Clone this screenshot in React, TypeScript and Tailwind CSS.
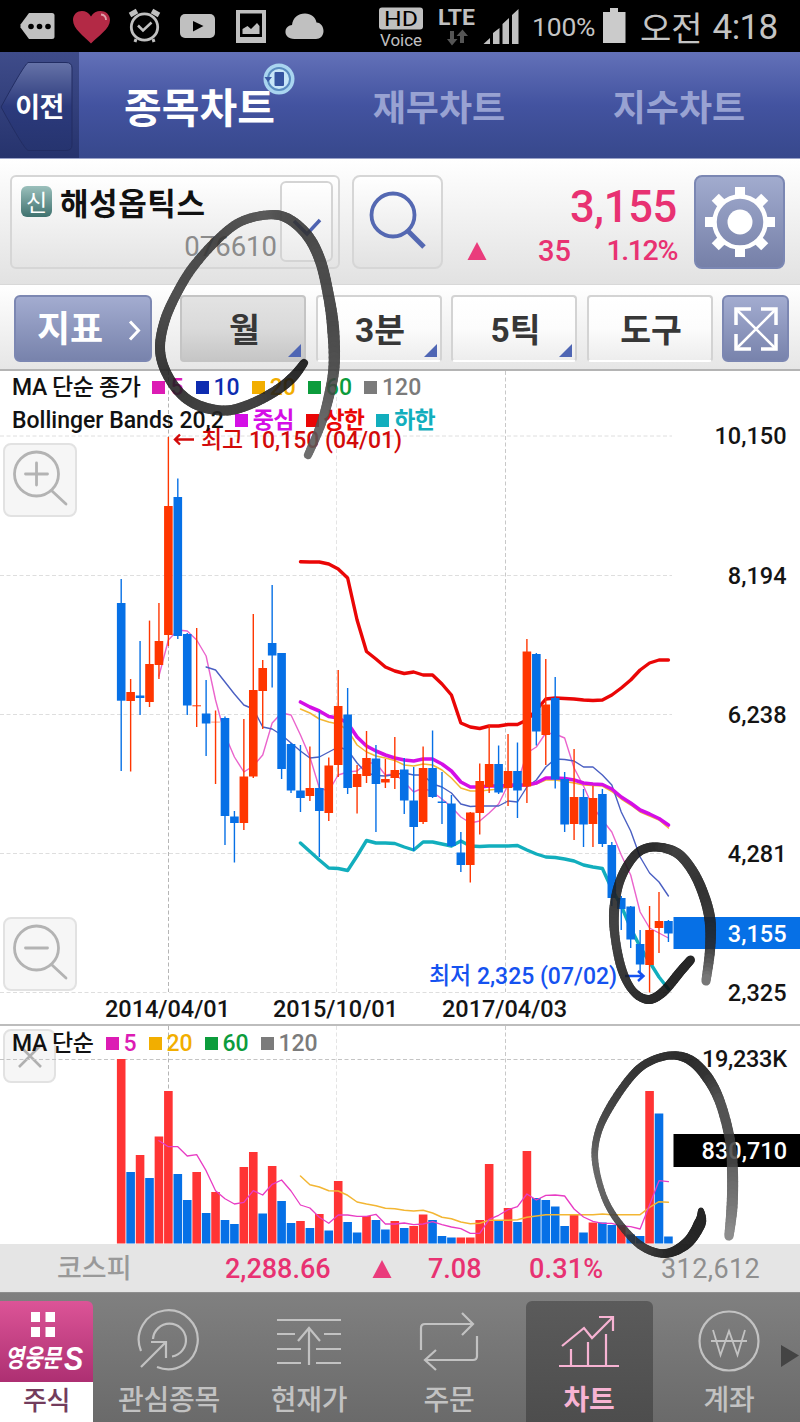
import type { ReactNode } from 'react';
import clsx from 'clsx';

const FIRST_X = 121.2;
const STEP = 9.435;
const RED = '#ff3600';
const BLUE = '#0670e6';

const xAt = (i: number) => FIRST_X + i * STEP;

// [up, high, body top, body bottom, low, volume top]
const candles: [number, number, number, number, number, number][] = [
  [0, 579, 603, 700.7, 771, 1059],
  [1, 679, 692, 701, 771.5, 1172],
  [0, 641, 695.5, 698, 715, 1155],
  [1, 620.6, 664, 702, 707, 1178],
  [1, 603, 641, 665, 679, 1136.5],
  [1, 437, 506, 635, 646, 1091],
  [0, 478.5, 497, 636, 639, 1174],
  [0, 633, 634, 705.5, 715, 1200],
  [1, 628, 705.3, 706.3, 727, 1172],
  [0, 680, 713.5, 723.5, 756, 1213],
  [1, 710.5, 721.8, 722.3, 784, 1192],
  [0, 716.5, 718, 816, 845, 1220],
  [0, 811, 816.5, 823, 862.5, 1224],
  [1, 719, 776.5, 823, 830, 1167],
  [1, 614, 690, 776.5, 778, 1152],
  [1, 660, 668, 691, 729, 1213.5],
  [0, 585, 643, 655.5, 687.5, 1166],
  [0, 653, 653, 769, 779, 1201],
  [0, 743, 744, 790.5, 793, 1223],
  [0, 745, 790.5, 798, 812, 1221],
  [1, 746.5, 788, 796, 801, 1228],
  [0, 711, 788, 811, 857, 1214],
  [1, 757.5, 765.5, 813, 821, 1230.5],
  [1, 670, 706, 765, 777, 1181],
  [0, 688, 714.5, 788, 794, 1222],
  [1, 765, 774, 787, 813.5, 1232.5],
  [1, 731, 758, 776, 783, 1216],
  [0, 745, 758.5, 784, 832, 1220],
  [1, 759, 779, 782.5, 788, 1229.5],
  [1, 737, 770, 778, 789, 1221],
  [0, 758, 769.5, 800.5, 814, 1228],
  [0, 767, 800.5, 827, 851, 1226],
  [1, 746.5, 768, 822, 824, 1214.5],
  [0, 730.5, 768, 797, 798, 1220],
  [0, 772, 801.5, 803, 824, 1236],
  [0, 795, 803.5, 846, 847, 1237.5],
  [0, 832, 852.5, 865, 872, 1237.5],
  [1, 812, 812.5, 865, 882.5, 1237.5],
  [1, 763.5, 781, 813, 834.5, 1220],
  [1, 725, 764, 787, 793, 1164],
  [0, 745.5, 764, 792.5, 794, 1220.5],
  [1, 734, 771, 788, 806, 1208],
  [0, 742.5, 771, 790.5, 818, 1222],
  [1, 639, 651.5, 786.5, 803, 1151],
  [0, 653, 654, 731.5, 745.5, 1198],
  [1, 659, 704.5, 735, 765, 1200],
  [0, 677, 698, 779.5, 788.5, 1206.5],
  [0, 772, 779, 824.5, 832, 1226],
  [1, 749, 797, 824, 840, 1214.5],
  [0, 789, 797, 824.5, 847, 1232.5],
  [1, 786, 798, 824, 847, 1222.5],
  [0, 789, 794, 844, 847, 1222.5],
  [0, 842, 845, 898, 906, 1225],
  [0, 896, 898, 909, 930, 1225],
  [0, 906, 906.5, 939.5, 948, 1234.5],
  [0, 930, 944, 964.5, 973, 1236],
  [1, 906, 930, 965, 992.5, 1091],
  [1, 892, 921, 928, 953, 1113.5],
  [0, 920, 921, 933.5, 942, 1236.5],
];

// Volume colours follow the previous month's volume, not the candle
const volumeReds = new Set([
  0, 2, 4, 5, 8, 10, 13, 14, 16, 19, 21, 23, 26, 29, 31, 32, 36, 37, 38, 39, 41, 43, 48, 50, 53, 56,
]);

const ma5 = [
  676, 640, 630, 631, 640, 656, 700, 735, 757, 772, 766, 755, 723, 713, 715, 735, 757, 788, 791, 775,
  772, 771, 763, 763, 775, 774, 782, 792, 788, 792, 799, 807, 817, 823, 821, 813, 804, 785, 783, 753,
  747, 733, 734, 738, 768, 786, 807, 820, 832, 855, 875, 912, 928, 933, 938,
];
const ma10 = [
  667, 670, 682, 694, 705, 709, 727, 729, 735, 743, 751, 758, 757, 752, 747, 750, 763, 773, 775.5,
  776, 774.5, 773, 775, 775, 784, 787, 793, 804, 806.5, 806, 806, 806, 801, 802, 787, 780, 767, 759,
  759.5, 761, 767, 767, 775, 785, 812, 831, 857, 873, 882, 896,
];
const middle = [
  702, 707, 711, 716.5, 718, 723, 737, 746, 751, 755, 758, 760, 761, 759, 759, 764, 771, 782, 787,
  787, 786, 786, 785.5, 785, 785, 783, 778, 778, 778.5, 780, 783, 784, 784.5, 789, 797, 803, 810, 814,
  818.5, 825,
];
const ma20 = [
  709, 713, 719, 722, 724, 730, 745, 752, 756, 758, 760.5, 765, 766, 764, 765, 770, 778, 788, 791, 791,
  790, 789, 787, 786, 786, 784, 780, 780, 781.5, 783, 785, 785.5, 786, 791.5, 799, 805, 812, 816, 820,
  828,
];
const upper = [
  561.7, 562, 562, 564, 569, 578, 620, 651.5, 659, 667, 671, 673.5, 672, 675, 675, 684, 695, 723, 727,
  728.5, 726, 726, 724.5, 724.5, 720, 710, 699, 698, 698.5, 699, 700, 700.5, 700, 695, 688, 680, 670,
  663, 660, 660,
];
const lower = [
  843, 851.5, 860, 868, 868.5, 870.5, 856, 840.5, 843, 843, 843.5, 847, 850, 842, 842, 844, 846, 841,
  846, 846.5, 846, 846, 846, 845.5, 850, 854, 857, 857.5, 859, 861, 865, 867, 868.5, 889, 906, 928, 947,
  962, 977, 989,
];
const volumeMa5 = [
  1140.7, 1146.7, 1146.7, 1156, 1154.7, 1170.7, 1190.7, 1198.7, 1204, 1202.3, 1190.7, 1195, 1184.3,
  1180, 1191, 1205, 1208, 1217.3, 1223.3, 1215, 1215, 1216.3, 1216.3, 1214.3, 1224, 1224, 1223, 1224.7,
  1224, 1221.7, 1224.7, 1227, 1228.7, 1233.3, 1233.3, 1219.3, 1215.3, 1209.7, 1206.7, 1194, 1200,
  1195.3, 1195, 1196, 1209, 1217, 1221.3, 1223.3, 1223.3, 1226, 1226.7, 1229, 1205, 1180.7, 1181.7,
];
const volumeMa20 = [
  1176, 1184.7, 1187, 1190.7, 1191, 1195.3, 1202, 1204, 1205.7, 1208.3, 1208.7, 1210.3, 1211, 1210.3,
  1213, 1217.3, 1218.7, 1222, 1223.7, 1223.3, 1220.3, 1220.3, 1220.3, 1219.7, 1217.3, 1216, 1214.7,
  1214.7, 1214.7, 1214.7, 1214.7, 1214.7, 1214, 1214.7, 1214.7, 1214.7, 1214.7, 1207.3, 1201.7, 1202.3,
];

function Series({ start, ys, color, width }: { start: number; ys: number[]; color: string; width: number }) {
  return (
    <polyline
      points={ys.map((y, k) => `${xAt(start + k)},${y}`).join(' ')}
      fill="none"
      stroke={color}
      strokeWidth={width}
      strokeLinecap="round"
      strokeLinejoin="round"
    />
  );
}

function Grid({ x, y1, y2, color }: { x: number; y1: number; y2: number; color: string }) {
  return <line x1={x} x2={x} y1={y1} y2={y2} stroke={color} strokeDasharray="4 2.5" />;
}

/* ---------- freehand marker ---------- */

// [x, y, width, gray]
type Ink = [number, number, number, number];

const inkMonth: Ink[] = [
  [304, 363, 8, 14], [293, 377, 10, 16], [277, 390, 10, 26], [253, 403, 10, 40], [227, 410.5, 10, 40],
  [200, 406, 10.5, 38], [180, 393, 10, 34], [165, 370, 10, 30], [160, 347, 10, 40], [165, 320, 10, 50],
  [177, 293, 9.5, 56], [193, 267, 9.5, 56], [217, 240, 9, 50], [240, 222, 9, 60], [267, 215, 9, 70],
  [287, 218, 10, 56], [307, 235, 11, 50], [320, 260, 11, 56], [328, 293, 11, 54], [333, 327, 12, 50],
  [334, 367, 11, 60], [328, 400, 10, 74], [320, 427, 9, 84], [308, 455, 8, 92],
];
const inkPrice: Ink[] = [
  [690.5, 960, 9, 10], [680, 972, 9.5, 10], [663, 992, 9.5, 12], [648, 999.5, 9, 14], [633, 991, 8, 20],
  [622, 970, 9, 30], [615.5, 940, 9, 40], [614, 913, 10, 40], [618, 887, 9, 30], [627, 866, 9, 24],
  [640, 851, 9, 20], [657, 847, 9, 16], [677, 853, 10, 40], [692, 870, 10, 30], [703, 893, 10.5, 24],
  [710, 920, 11, 30], [710, 950, 10, 40], [706, 981, 9, 110],
];
const inkVolume: Ink[] = [
  [701, 1210, 5, 10], [700, 1223, 12, 8], [687, 1243, 11, 10], [665, 1253.5, 8.5, 14], [640, 1245, 8, 40],
  [617, 1220, 6.5, 60], [603, 1194, 6, 80], [595, 1160, 6.5, 84], [598, 1133, 7, 60], [610, 1107, 8, 44],
  [630, 1078, 8, 30], [647, 1063, 8, 24], [670, 1055.5, 8, 20], [690, 1060, 10, 16], [707, 1077, 11, 24],
  [720, 1102, 10, 60], [730, 1140, 10, 60], [732.5, 1173, 11, 80], [732, 1207, 11, 100],
  [729, 1236, 9, 130],
];

function Marker({ points }: { points: Ink[] }) {
  const parts: ReactNode[] = [];
  const pieces = 8;
  const at = (i: number) => points[Math.max(0, Math.min(points.length - 1, i))];
  const spline = (i: number, t: number) =>
    [0, 1, 2, 3].map((k) => {
      const [a, b, c, d] = [at(i - 1)[k], at(i)[k], at(i + 1)[k], at(i + 2)[k]];
      if (k > 1) return b + (c - b) * t;
      return 0.5 * (2 * b + (c - a) * t + (2 * a - 5 * b + 4 * c - d) * t * t + (3 * b - a - 3 * c + d) * t ** 3);
    });
  for (let i = 0; i < points.length - 1; i++) {
    for (let n = 0; n < pieces; n++) {
      const [x1, y1, w, g] = spline(i, n / pieces);
      const [x2, y2] = spline(i, (n + 1) / pieces);
      parts.push(
        <line key={`${i}-${n}`} x1={x1} y1={y1} x2={x2} y2={y2} stroke={`rgb(${g},${g},${g})`} strokeWidth={w} strokeLinecap="round" />,
      );
    }
  }
  return <g opacity={0.88}>{parts}</g>;
}

/* ---------- top of the screen ---------- */

function StatusBar() {
  return (
    <div className="h-[52px] bg-black flex items-center text-[#c4c4c4]">
      <svg className="w-[520px] h-[52px] shrink-0" viewBox="0 0 520 52" fill="#c0c0c0">
        <path d="M29 13H52Q54.500 13 54.500 15.500V36.500Q54.500 39 52 39H29L20.500 27.500V24.500Z" />
        <g fill="#000">
          <circle cx="31" cy="26.500" r="2.800" />
          <circle cx="39.500" cy="26.500" r="2.800" />
          <circle cx="48" cy="26.500" r="2.800" />
        </g>
        <path fill="#b32945" d="M91 43.500C84 36 73 29 73 20C73 10 86 7.500 91 16.500C96 7.500 110 10 110 20C110 29 98 36 91 43.500Z" />
        <path d="M101 14.500Q106 15 106 20" fill="none" stroke="#e1a0ac" strokeWidth="1.800" />
        <g fill="none" stroke="#c0c0c0">
          <circle cx="144.500" cy="27" r="13.200" strokeWidth="2.800" />
          <path d="M138 25.500L143 30.500L151.500 22.500" strokeWidth="2.500" />
          <path d="M130 15L137 11M152 11L159 15" strokeWidth="5" />
          <path d="M136 39L135 42M153 39L154 42" strokeWidth="3" />
        </g>
        <rect x="180" y="14" width="35" height="24" rx="5" />
        <path fill="#000" d="M193 21L203.500 26L193 31.500Z" />
        <path fillRule="evenodd" d="M236 10H266V43H236ZM240 13.500V37H262V13.500Z" />
        <path d="M242.500 34V29L247.500 26L251 29L257 23L259.500 26V34Z" />
        <path d="M294.500 39C288 39 285 35 285.500 31C286 27 289 25.500 292 25C293 17.500 298 13.500 305 13.500C311 13.500 315.500 17 316.500 22.500C321 22.500 323.500 27 323.500 31C323.500 36 320 39 316 39Z" />
        <rect x="379" y="7.500" width="44" height="22" rx="3" />
        <text x="384" y="26" fontFamily="Roboto" fontSize="21" fill="#000" textLength="34" lengthAdjust="spacingAndGlyphs">HD</text>
        <text x="380" y="45.500" fontFamily="Roboto" fontSize="17" textLength="42" lengthAdjust="spacingAndGlyphs">Voice</text>
        <text x="438" y="24.500" fontFamily="Roboto" fontWeight="700" fontSize="22.500" textLength="37" lengthAdjust="spacingAndGlyphs">LTE</text>
        <path fill="#555" d="M450 31H454V39H457.500L452 45.500L447 39H450ZM460 43V36H456.500L462.500 29.500L468 36H464V43Z" />
        <path d="M483.500 44L490 38V44ZM493 44V33L499.500 28V44ZM502.500 44V24L509 18V44ZM512 44V15L518.500 9V44Z" />
      </svg>
      <span className="ml-[12px] w-[65px] font-[Roboto] text-[26.500px] leading-none tracking-[-0.2px] pt-[2px]">100%</span>
      <svg className="ml-[5px] w-[24px] h-[36px]" viewBox="0 0 24 36">
        <path fill="#cbcbcb" d="M8 0H16V4H23.500V35H1V4H8Z" />
      </svg>
      <div className="ml-[14px] flex items-center gap-[10px] leading-none whitespace-nowrap">
        <span className="font-['Noto_Sans_CJK_KR'] text-[34px] pt-[1px]">오전</span>
        <span className="font-[Roboto] text-[35px] tracking-[-0.6px] pt-[3px]">4:18</span>
      </div>
    </div>
  );
}

function Header() {
  return (
    <header className="h-[107px] flex bg-linear-to-b from-[#6371b8] via-[#4353a0] to-[#37488c] border-b border-[#9ba3c9] font-['Noto_Sans_CJK_KR'] font-bold text-[36px] leading-none">
      <button className="relative w-[79px] bg-linear-to-b from-[#3f4c8a] to-[#26336d] text-white text-[27px] flex items-center justify-center">
        <svg className="absolute inset-0" width="79" height="107" viewBox="0 0 79 107">
          <defs>
            <linearGradient id="back" x1="0" y1="0" x2="0" y2="1">
              <stop offset="0" stopColor="#6673a8" />
              <stop offset="0.5" stopColor="#2c3a7c" />
              <stop offset="1" stopColor="#26346f" />
            </linearGradient>
          </defs>
          <path d="M28 10.500H66Q72 10.500 72 16V93Q72 98.500 66 98.500H28Q24 97 1 55Q24 13 28 10.500Z" fill="url(#back)" stroke="#222d63" />
        </svg>
        <span className="relative tracking-tight">이전</span>
      </button>
      <nav className="flex-1 flex items-center">
        <a className="relative w-[241px] text-center text-[41px] text-white">
          종목차트
          <svg className="absolute right-[25px] -top-[22px]" width="32" height="32" viewBox="0 0 32 32">
            <circle cx="16" cy="16" r="15.500" fill="#a9d5f0" />
            <circle cx="16" cy="16" r="11" fill="#c6e6f8" stroke="#5a8cc0" strokeWidth="2" />
            <path d="M1.500 14H9L5 19Z" fill="#3b5aa5" />
            <rect x="11.500" y="9" width="9.500" height="14" rx="1" fill="#3554a0" />
          </svg>
        </a>
        <a className="w-[238px] text-center text-[#98a2d2]">재무차트</a>
        <a className="w-[242px] text-center text-[#98a2d2]">지수차트</a>
      </nav>
    </header>
  );
}

function StockInfo() {
  return (
    <section className="h-[126px] px-[10px] pt-[16px] flex bg-linear-to-b from-white to-[#e2e2e2] border-b border-[#d8d8d8]">
      <div className="w-[330px] h-[94px] rounded-md border-2 border-[#d6d6d6] bg-linear-to-b from-white to-[#e4e4e4] flex">
        <div className="w-[268px] flex flex-col">
          <div className="mt-[7px] ml-[9px] h-[34px] flex items-center gap-[8px] font-['Noto_Sans_CJK_KR'] leading-none">
            <span className="w-[31px] h-[31px] rounded-md bg-linear-to-b from-[#9bc0bc] to-[#3f726f] text-white text-[23px] flex items-center justify-center">신</span>
            <span className="text-[31px] font-bold tracking-[0.6px] text-[#111]">해성옵틱스</span>
          </div>
          <span className="self-end mr-[3px] mt-[15px] font-[Roboto] text-[27.500px] leading-none text-[#8b8b8b]">076610</span>
        </div>
        <div className="mt-[4px] w-[53px] h-[81px] rounded-md border-2 border-[#d4d4d4] bg-linear-to-b from-white to-[#ebebeb] flex items-center justify-center">
          <svg width="32" height="20" viewBox="0 0 32 20" fill="none" stroke="#4d62b0" strokeWidth="3.500" className="mt-3">
            <path d="M3 3L16 16L29 2" />
          </svg>
        </div>
      </div>
      <button className="ml-[12px] w-[91px] h-[94px] rounded-lg border-2 border-[#d6d6d6] bg-linear-to-b from-white to-[#e2e2e2] flex items-center justify-center">
        <svg className="-mt-1" width="60" height="60" viewBox="0 0 60 60" fill="none" stroke="#5468b2" strokeWidth="3.800">
          <circle cx="25" cy="25" r="21.500" />
          <path d="M40 41L56 57" strokeWidth="5" />
        </svg>
      </button>
      <div className="ml-[24px] w-[210px] font-[Roboto] font-medium text-[#e83272] leading-none">
        <div className="mt-[11px] text-right text-[43.500px] tracking-[-0.3px]">3,155</div>
        <div className="mt-[7px] flex items-center text-[29px]">
          <svg width="20" height="18" viewBox="0 0 20 18">
            <path d="M10 0L19.500 18H0.500Z" fill="#ea3c7c" />
          </svg>
          <span className="ml-[51px]">35</span>
          <span className="ml-auto text-[28.500px] tracking-[-1.400px]">1.12%</span>
        </div>
      </div>
      <button className="ml-[17px] w-[91px] h-[94px] rounded-lg border-2 border-[#7b87b3] bg-linear-to-b from-[#a1abce] to-[#7680a8] flex items-center justify-center">
        <svg width="70" height="70" viewBox="-35 -35 70 70">
          <circle r="25.500" fill="none" stroke="#fff" strokeWidth="4.500" />
          <circle r="12.500" fill="#fff" />
          <g fill="#fff">
            {[0, 45, 90, 135, 180, 225, 270, 315].map((a) => (
              <rect key={a} x="-5" y="-35" width="10" height="9" transform={`rotate(${a})`} />
            ))}
          </g>
        </svg>
      </button>
    </section>
  );
}

function ToolButton({ label, active, menu = true }: { label: string; active?: boolean; menu?: boolean }) {
  return (
    <button
      className={clsx(
        'relative w-[126px] h-[67px] shrink-0 rounded border-2 flex items-center justify-center pt-[5px] pl-[3px] text-[33.500px] text-[#373737]',
        active
          ? 'border-[#c4c4c4] bg-linear-to-b from-[#e3e3e3] via-[#dadada] to-[#c6c6c6]'
          : 'border-[#d3d3d3] border-b-transparent bg-linear-to-b from-white via-[#fcfcfc] to-[#ededed]',
      )}
    >
      <span>{label}</span>
      {menu && (
        <svg className="absolute right-[3px] bottom-[3px]" width="13" height="13" viewBox="0 0 13 13">
          <path d="M13 0V13H0Z" fill="#4f66b4" />
        </svg>
      )}
    </button>
  );
}

function Toolbar() {
  return (
    <section className="h-[86px] pt-[10px] pl-[14px] pr-[10px] flex bg-linear-to-b from-white to-[#e6e6e6] border-b-2 border-[#b4b4b4] font-[Roboto,'Noto_Sans_CJK_KR'] font-bold leading-none">
      <button className="w-[138px] h-[67px] shrink-0 rounded-md border-2 border-[#7c87b2] bg-linear-to-b from-[#a3acd0] to-[#7883ac] flex items-center text-white text-[36px]">
        <span className="ml-[21px] pt-[3px]">지표</span>
        <svg className="ml-[25px] mt-1" width="13" height="21" viewBox="0 0 13 21" fill="none" stroke="#fff" strokeWidth="3">
          <path d="M2 1.500L10.500 10.500L2 19.500" />
        </svg>
      </button>
      <div className="ml-[28px] flex gap-[9.500px]">
        <ToolButton label="월" active />
        <ToolButton label="3분" />
        <ToolButton label="5틱" />
        <ToolButton label="도구" menu={false} />
      </div>
      <button className="ml-[9.500px] w-[67px] h-[67px] shrink-0 rounded-md border-2 border-[#7c87b2] bg-linear-to-b from-[#a3acd0] to-[#7883ac] flex items-center justify-center">
        <svg width="44" height="44" viewBox="0 0 44 44" fill="none" stroke="#fff" strokeWidth="3.500">
          <path d="M2 18V2H17M27 2H42V18M42 27V42H27M17 42H2V27" />
          <path d="M3 3L41 41M41 3L3 41" strokeWidth="2.600" />
        </svg>
      </button>
    </section>
  );
}

/* ---------- charts ---------- */

function Legend({ color, label }: { color: string; label: string }) {
  return (
    <span className="ml-[12px] flex items-center gap-[5px]" style={{ color }}>
      <i className="w-[13px] h-[13px]" style={{ backgroundColor: color }} />
      {label}
    </span>
  );
}

function ZoomButton({ plus }: { plus?: boolean }) {
  return (
    <button className="w-[74px] h-[74px] rounded-lg border-2 border-[#e2e2e2] bg-[#f6f6f6]">
      <svg width="70" height="70" viewBox="0 0 70 70" fill="none" stroke="#b3b3b3" strokeWidth="2.800" strokeLinecap="round">
        <circle cx="31.500" cy="29" r="22" />
        <path d={plus ? 'M20.500 29H42.500M31.500 18V40' : 'M20.500 29H42.500'} />
        <path d="M47 46L61 59" />
      </svg>
    </button>
  );
}

function PriceChart() {
  const levels: [number, string][] = [
    [436, '10,150'],
    [575.5, '8,194'],
    [714.5, '6,238'],
    [853.5, '4,281'],
    [992.5, '2,325'],
  ];
  const dates: [number, string][] = [
    [105, '2014/04/01'],
    [273, '2015/10/01'],
    [442, '2017/04/03'],
  ];
  return (
    <section className="relative h-[655px] bg-white border-b-2 border-[#bdbdbd]">
      <svg className="block" width="800" height="653" viewBox="0 371 800 653" fontFamily="Roboto, 'Noto Sans CJK KR', sans-serif" fontSize="23.500" fontWeight="500">
        <Grid x={168.5} y1={371} y2={992} color="#b5b5b5" />
        <Grid x={336.5} y1={371} y2={992} color="#e4e4e4" />
        <Grid x={505.5} y1={371} y2={992} color="#c8c8c8" />
        {levels.map(([y]) => (
          <line key={y} x1="0" x2="672" y1={y} y2={y} stroke="#dedede" strokeDasharray="4 2.500" />
        ))}
        <Series start={19} ys={ma20} color="#f3b633" width={1.5} />
        <Series start={4} ys={ma5} color="#ea64cc" width={1.4} />
        <Series start={9} ys={ma10} color="#4a5fc2" width={1.4} />
        <Series start={19} ys={middle} color="#d40fe6" width={3.6} />
        <Series start={19} ys={upper} color="#ea0606" width={3.4} />
        <Series start={19} ys={lower} color="#12aebd" width={3.4} />
        {candles.map(([up, high, top, bottom, low], i) => {
          const color = up ? RED : BLUE;
          return (
            <g key={i}>
              <line x1={xAt(i)} x2={xAt(i)} y1={high} y2={low} stroke={color} strokeWidth="1.400" />
              <rect x={xAt(i) - 4.3} y={top} width="8.600" height={bottom - top} fill={color} />
            </g>
          );
        })}
        {levels.map(([y, label]) => (
          <text key={label} x="786.500" y={y + 8} textAnchor="end" fill="#141414">{label}</text>
        ))}
        {dates.map(([x, label]) => (
          <text key={label} x={x} y="1017" textLength="125" fill="#141414">{label}</text>
        ))}
        <g fill="none" strokeWidth="2.400">
          <path d="M194 439.500H175M180 434.500L175 439.500L180 444.500" stroke="#d20a0a" />
          <path d="M625 976H643M638 971L643.500 976L638 981" stroke="#1552f0" />
        </g>
        <text x="201" y="448" textLength="201" lengthAdjust="spacingAndGlyphs" fill="#d20a0a">최고 10,150 (04/01)</text>
        <text x="429" y="984" textLength="188" lengthAdjust="spacingAndGlyphs" fill="#1552f0">최저 2,325 (07/02)</text>
        <rect x="673.500" y="917" width="126.500" height="32" fill={BLUE} />
        <text x="786.500" y="941.500" textAnchor="end" fill="#fff">3,155</text>
      </svg>
      <div className="absolute left-[12px] top-[5px] flex flex-col gap-[10px] font-[Roboto,'Noto_Sans_CJK_KR'] font-medium text-[23px] leading-[23px] text-[#111] whitespace-nowrap">
        <div className="flex">
          <span className="tracking-[-0.4px]">MA 단순 종가</span>
          <Legend color="#dc1cb4" label="5" />
          <Legend color="#0e2cb0" label="10" />
          <Legend color="#f2ae00" label="20" />
          <Legend color="#0c9c3c" label="60" />
          <Legend color="#7b7b7b" label="120" />
        </div>
        <div className="flex">
          <span>Bollinger Bands 20,2</span>
          <div className="-ml-[1px] flex font-bold tracking-[-0.8px]">
            <Legend color="#d40fe6" label="중심" />
            <Legend color="#ea0606" label="상한" />
            <Legend color="#12aebd" label="하한" />
          </div>
        </div>
      </div>
      <div className="absolute left-[3px] top-[72px]">
        <ZoomButton plus />
      </div>
      <div className="absolute left-[3px] top-[546px]">
        <ZoomButton />
      </div>
    </section>
  );
}

function VolumeChart() {
  return (
    <section className="relative h-[218px] bg-white">
      <button className="absolute left-[3px] top-[3px] w-[53px] h-[54px] rounded-lg border-2 border-[#e2e2e2] bg-[#f6f6f6] flex items-center justify-center">
        <svg width="26" height="26" viewBox="0 0 26 26" stroke="#b0b0b0" strokeWidth="2.600">
          <path d="M2 2L24 24M24 2L2 24" />
        </svg>
      </button>
      <svg className="relative block" width="800" height="218" viewBox="0 1026 800 218" fontFamily="Roboto" fontSize="23.500" fontWeight="500">
        <Grid x={168.5} y1={1026} y2={1243} color="#b5b5b5" />
        <Grid x={336.5} y1={1026} y2={1243} color="#e4e4e4" />
        <Grid x={505.5} y1={1026} y2={1243} color="#c8c8c8" />
        <line x1="0" x2="700" y1="1059.500" y2="1059.500" stroke="#c4c4c4" strokeDasharray="4 2.500" />
        {candles.map(([, , , , , top], i) => (
          <rect
            key={i}
            x={xAt(i) - 4.3}
            y={top}
            width="8.600"
            height={1243.5 - top}
            fill={volumeReds.has(i) ? '#ff3434' : BLUE}
          />
        ))}
        <Series start={19} ys={volumeMa20} color="#f3b633" width={1.5} />
        <Series start={4} ys={volumeMa5} color="#e83cc4" width={1.3} />
        <text x="787" y="1066.500" textAnchor="end" textLength="85" fill="#141414">19,233K</text>
        <rect x="673.500" y="1134" width="126.500" height="33" />
        <text x="787" y="1159" textAnchor="end" fill="#fff">830,710</text>
      </svg>
      <div className="absolute left-[12px] top-[6px] flex font-[Roboto,'Noto_Sans_CJK_KR'] font-medium text-[23px] leading-[23px] text-[#111] whitespace-nowrap">
        <span className="tracking-[-0.4px]">MA 단순</span>
        <div className="flex tracking-[-0.1px]">
          <Legend color="#dc1cb4" label="5" />
          <Legend color="#f2ae00" label="20" />
          <Legend color="#0c9c3c" label="60" />
          <Legend color="#7b7b7b" label="120" />
        </div>
      </div>
    </section>
  );
}

/* ---------- bottom of the screen ---------- */

function Ticker() {
  return (
    <div className="h-[48px] pt-[2px] flex items-center bg-[#e5e5e5] font-[Roboto,'Noto_Sans_CJK_KR'] font-medium text-[27px] leading-none text-[#e83272] whitespace-nowrap">
      <span className="ml-[57px] w-[168px] text-[#999]">코스피</span>
      <span className="w-[147px]">2,288.66</span>
      <svg width="20" height="18" viewBox="0 0 20 18">
        <path d="M10 0L19.500 18H0.500Z" fill="#ea3c7c" />
      </svg>
      <span className="ml-[36px] w-[101px]">7.08</span>
      <span className="w-[132px] tracking-[0.2px]">0.31%</span>
      <span className="font-normal tracking-[0.400px] text-[#8f8f8f]">312,612</span>
    </div>
  );
}

function NavItem({ label, active, children }: { label: string; active?: boolean; children: ReactNode }) {
  return (
    <a
      className={clsx(
        'w-[127px] h-full rounded-t-md flex flex-col items-center pt-[8px]',
        active ? 'bg-linear-to-b from-[#5b5b5b] to-[#4d4d4d] text-[#f7b3d3] font-bold' : 'text-[#c2c2c2]',
      )}
    >
      <svg width="66" height="64" viewBox="0 0 66 64" fill="none" stroke="currentColor" strokeWidth="2.200">
        {children}
      </svg>
      <span className="mt-[11px]">{label}</span>
    </a>
  );
}

function BottomNav() {
  return (
    <nav className="relative h-[130px] pt-[8px] flex bg-linear-to-b from-[#808080] to-[#6a6a6a] border-t border-[#8e8e8e] font-['Noto_Sans_CJK_KR'] font-medium text-[28px] leading-none tracking-[-0.3px] whitespace-nowrap">
      <a className="w-[93px] h-[121px] flex flex-col text-[#733c5c]">
        <div className="h-[81px] rounded-tr-md bg-linear-to-b from-[#dc5497] to-[#ad2f72]">
          <svg width="93" height="81" viewBox="0 0 93 81" fill="#fff">
            <path d="M31 11H40V21H31ZM45.500 11H55V21H45.500ZM31 26H40V36H31ZM45.500 26H55V36H45.500Z" />
            <text x="5" y="66" fontFamily="Noto Sans CJK KR" fontStyle="italic" fontWeight="700" fontSize="25" textLength="56" lengthAdjust="spacingAndGlyphs">영웅문</text>
            <text x="64" y="69" fontFamily="Liberation Sans" fontStyle="italic" fontWeight="700" fontSize="34" textLength="19" lengthAdjust="spacingAndGlyphs">S</text>
          </svg>
        </div>
        <span className="flex-1 bg-white pt-[4px] text-center text-[26px]">주식</span>
      </a>
      <div className="ml-[12.500px] flex gap-[13px]">
        <NavItem label="관심종목">
          <path d="M21 58A29.500 29.500 0 1 0 5 42" />
          <path d="M17 30A16.500 16.500 0 1 1 36 47.500" />
          <path d="M5 58L30 33M15 33H30V49" />
        </NavItem>
        <NavItem label="현재가">
          <path d="M1 11H65M1 25H19M48 25H65M1 40H25M40 40H65M1 54H25M40 54H65" />
          <path d="M33 56V19M22 32L33 19L44 32" />
        </NavItem>
        <NavItem label="주문">
          <path d="M5 41V19Q5 15 9 15H57M46 4L57 15L46 26" />
          <path d="M61 27V47Q61 51 57 51H9M20 41L9 51L20 61" />
        </NavItem>
        <NavItem label="차트" active>
          <path d="M3 57H63M15 57V40M32 57V33M50 57V25" />
          <path d="M6 37L28 19L36 29L57 8M43 8H57V22" />
        </NavItem>
        <NavItem label="계좌">
          <circle cx="33" cy="32" r="29.500" />
          <path d="M17 21L24.500 46L33 22L41.500 46L49 21M15 32H51" strokeWidth="1.800" />
        </NavItem>
      </div>
      <svg className="absolute right-0 top-[52px]" width="20" height="22" viewBox="0 0 20 22">
        <path d="M1 0L19 10.500L1 22Z" fill="#444" />
      </svg>
    </nav>
  );
}

export default function App() {
  return (
    <div className="relative w-[800px] h-[1422px] overflow-hidden bg-white">
      <StatusBar />
      <Header />
      <StockInfo />
      <Toolbar />
      <PriceChart />
      <VolumeChart />
      <Ticker />
      <BottomNav />
      <svg className="absolute inset-0 pointer-events-none" width="800" height="1422" viewBox="0 0 800 1422">
        <Marker points={inkMonth} />
        <Marker points={inkPrice} />
        <Marker points={inkVolume} />
      </svg>
    </div>
  );
}
